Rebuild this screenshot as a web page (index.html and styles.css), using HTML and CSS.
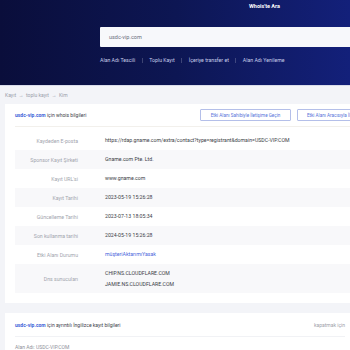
FILE: index.html
```html
<!DOCTYPE html>
<html lang="tr">
<head>
  <meta charset="UTF-8">
  <meta name="viewport" content="width=device-width, initial-scale=1.0">
  <title>Whois - usdc-vip.com</title>
  <link rel="stylesheet" href="styles.css">
</head>
<body>
  <div class="hero">
    <div class="hero-title">Whois'te Ara</div>
    <div class="search-box">usdc-vip.com</div>
    <div class="quick-links">
      <a href="#">Alan Adı Tescili</a>
      <span class="sep"></span>
      <a href="#">Toplu Kayıt</a>
      <span class="sep"></span>
      <a href="#">İçeriye transfer et</a>
      <span class="sep"></span>
      <a href="#">Alan Adı Yenileme</a>
    </div>
  </div>

  <div class="content">
    <div class="breadcrumb">Kayıt &nbsp;→&nbsp; toplu kayıt &nbsp;→&nbsp; Kim</div>

    <div class="card">
      <div class="card-head">
        <div class="card-title"><span class="domain">usdc-vip.com</span> için whois bilgileri</div>
        <button class="outline-btn">Etki Alanı Sahibiyle İletişime Geçin</button>
        <button class="outline-btn">Etki Alanı Aracısıyla İletişime Geçin</button>
      </div>
      <div class="info-table">
        <div class="info-row">
          <span class="label">Kaydeden E-posta</span>
          <span class="value">https://rdap.gname.com/extra/contact?type=registrant&amp;domain=USDC-VIP.COM</span>
        </div>
        <div class="info-row">
          <span class="label">Sponsor Kayıt Şirketi</span>
          <span class="value">Gname.com Pte. Ltd.</span>
        </div>
        <div class="info-row">
          <span class="label">Kayıt URL'si</span>
          <span class="value">www.gname.com</span>
        </div>
        <div class="info-row">
          <span class="label">Kayıt Tarihi</span>
          <span class="value">2023-05-19 15:26:28</span>
        </div>
        <div class="info-row">
          <span class="label">Güncelleme Tarihi</span>
          <span class="value">2023-07-13 18:05:34</span>
        </div>
        <div class="info-row">
          <span class="label">Son kullanma tarihi</span>
          <span class="value">2024-05-19 15:26:28</span>
        </div>
        <div class="info-row">
          <span class="label">Etki Alanı Durumu</span>
          <span class="value link">müşteriAktarımıYasak</span>
        </div>
        <div class="info-row tall">
          <span class="label">Dns sunucuları</span>
          <span class="value">CHIP.NS.CLOUDFLARE.COM<br>JAMIE.NS.CLOUDFLARE.COM</span>
        </div>
      </div>
    </div>

    <div class="card detail-card">
      <div class="detail-head">
        <div class="card-title"><span class="domain">usdc-vip.com</span> için ayrıntılı İngilizce kayıt bilgileri</div>
        <span class="close-text">kapatmak için</span>
      </div>
      <div class="detail-body">Alan Adı: USDC-VIP.COM</div>
    </div>
  </div>
</body>
</html>
```

FILE: styles.css
```css
* {
  margin: 0;
  padding: 0;
  box-sizing: border-box;
}

body {
  font-family: 'Roboto', 'Liberation Sans', sans-serif;
  background-color: #f3f4f8;
  width: 350px;
  overflow: hidden;
}

.hero {
  height: 86px;
  padding: 3px 0 0 100px;
  background: linear-gradient(90deg, #0a0e3b 0%, #0d1653 50%, #13207a 100%);
  border-bottom: 1px solid #d9dcea;
}

.hero-title {
  margin-left: 149px;
  font-size: 5.5px;
  line-height: 7px;
  font-weight: bold;
  color: #fff;
}

.search-box {
  margin-top: 17px;
  width: 260px;
  height: 20px;
  display: flex;
  align-items: center;
  padding-left: 9px;
  background-color: #f7f8fb;
  border-radius: 1px;
  font-size: 5.5px;
  color: #6a6e7c;
}

.quick-links {
  margin-top: 10px;
  display: flex;
  align-items: center;
  gap: 6.5px;
  font-size: 5.2px;
  line-height: 7px;
}

.quick-links a {
  color: #c8cdea;
  text-decoration: none;
}

.quick-links .sep {
  width: 1px;
  height: 5px;
  background-color: rgba(255, 255, 255, 0.2);
}

.content {
  padding-left: 5px;
}

.breadcrumb {
  height: 18px;
  display: flex;
  align-items: center;
  font-size: 5px;
  color: #9a9eab;
}

.card {
  width: 420px;
  background-color: #fff;
  padding: 0 10px 10px;
}

.card-head {
  height: 23px;
  display: flex;
  align-items: center;
  border-bottom: 1px solid #f2f0ec;
}

.card-title {
  width: 185px;
  font-size: 5px;
  color: #3e414a;
}

.domain {
  color: #3d5fd8;
  font-weight: bold;
}

.outline-btn {
  width: 91px;
  height: 12px;
  margin-right: 6px;
  background-color: #fff;
  border: 1px solid #b4bfe9;
  border-radius: 1px;
  font-family: inherit;
  font-size: 4.6px;
  color: #5572d9;
  white-space: nowrap;
  overflow: hidden;
}

.info-table {
  margin-top: 4px;
}

.info-row {
  height: 19px;
  display: flex;
  align-items: center;
  font-size: 5.2px;
}

.info-row:nth-child(even) {
  background-color: #f8f8fa;
}

.info-row.tall {
  height: 29px;
}

.info-row .label {
  width: 90px;
  padding-right: 27px;
  text-align: right;
  color: #a2a5ae;
}

.info-row .value {
  color: #3b3e46;
  line-height: 11px;
  white-space: nowrap;
}

.info-row .value.link {
  color: #4a66dc;
}

.detail-card {
  margin-top: 10px;
  padding-bottom: 20px;
}

.detail-head {
  width: 330px;
  height: 24px;
  display: flex;
  align-items: center;
  justify-content: space-between;
  border-bottom: 1px solid #f1f2f5;
}

.detail-head .card-title {
  width: auto;
}

.close-text {
  font-size: 5px;
  color: #9ea1aa;
}

.detail-body {
  padding-top: 7px;
  font-size: 5px;
  color: #8d909a;
}
```
